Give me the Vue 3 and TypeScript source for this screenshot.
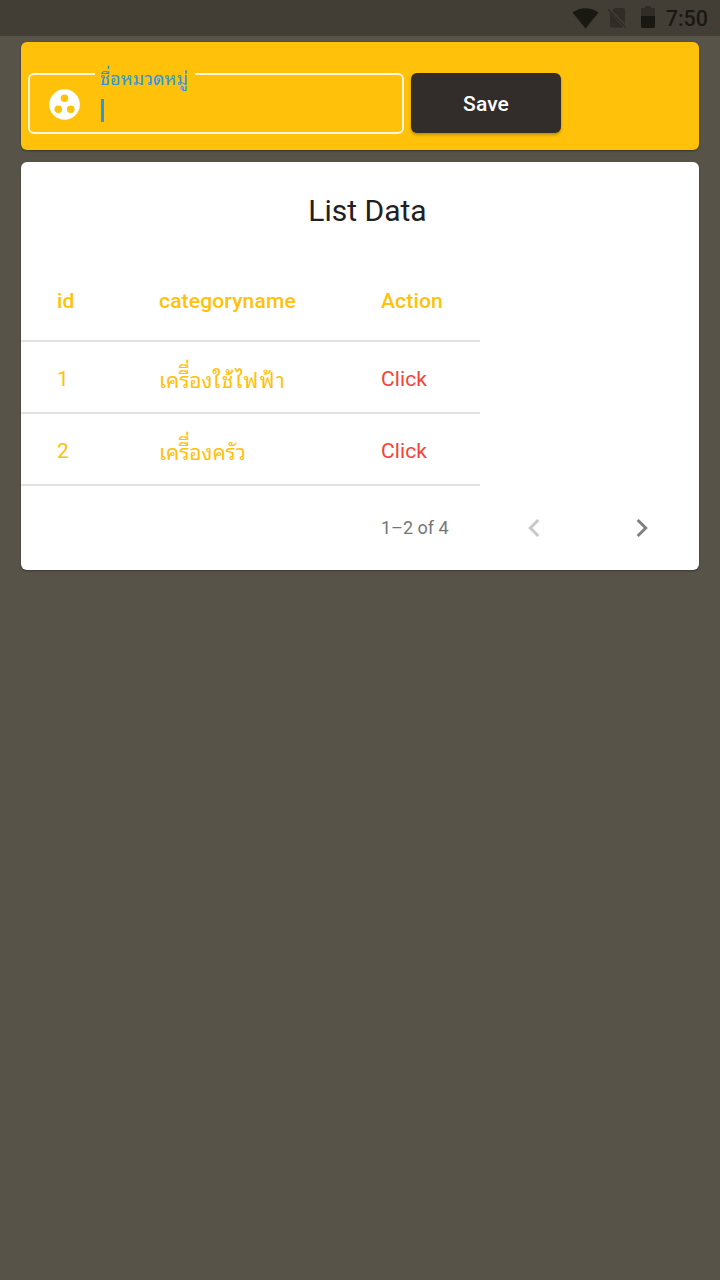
<script setup lang="ts">
import { ref } from 'vue'

interface Category {
  id: number
  name: string
  suffix: string
}

const categories = ref<Category[]>([
  { id: 1, name: 'เครืื่อง', suffix: 'ใช้ไฟฟ้า' },
  { id: 2, name: 'เครืื่องครัว', suffix: '' },
])
</script>

<template>
  <div class="screen">
    <header class="status">
      <svg class="wifi" viewBox="0 0 27 21"><path d="M.5 4.600C8-1.200 19-1.200 26.500 4.600L13.500 20.500Z" fill="#1a1813" /></svg>
      <svg class="sim" viewBox="0 0 21 22">
        <path d="M8 1h8.500a1.500 1.500 0 0 1 1.500 1.500v15.500L5.200 4z" fill="#302d27" />
        <path d="M3 5.500V19a1.500 1.500 0 0 0 1.500 1.500H16.500z" fill="#302d27" />
        <path d="M1 2.200L19 20.800" stroke="#302d27" stroke-width="1.600" fill="none" />
        <path d="M3.300 2.400L18.800 18.400" stroke="#413e36" stroke-width="1.200" fill="none" />
      </svg>
      <svg class="battery" viewBox="0 0 14 22">
        <path d="M4 0h6v2h3a1 1 0 0 1 1 1v7H0V3a1 1 0 0 1 1-1h3z" fill="#302d27" />
        <path d="M0 10h14v11a1 1 0 0 1-1 1H1a1 1 0 0 1-1-1z" fill="#1a1813" />
      </svg>
      <span class="clock">7:50</span>
    </header>

    <section class="card form">
      <fieldset class="field">
        <legend><span class="label">ชื่อหมวดหมู่</span></legend>
        <div class="input">
          <svg class="workspaces" viewBox="0 0 30 30">
            <circle cx="15" cy="15" r="14.800" fill="#fff" />
            <circle cx="15" cy="9" r="3.700" fill="#ffc109" />
            <circle cx="9" cy="19.600" r="3.700" fill="#ffc109" />
            <circle cx="21" cy="19.600" r="3.700" fill="#ffc109" />
          </svg>
          <i class="caret"></i>
        </div>
      </fieldset>
      <button class="save" type="button">Save</button>
    </section>

    <section class="card list">
      <h1>List Data</h1>
      <div class="table">
        <div class="row head">
          <span>id</span><span>categoryname</span><span>Action</span>
        </div>
        <div v-for="item in categories" :key="item.id" class="row">
          <span>{{ item.id }}</span>
          <span class="thai">{{ item.name }}<span v-if="item.suffix" class="suffix">{{ item.suffix }}</span></span>
          <span class="action">Click</span>
        </div>
      </div>
      <footer class="pager">
        <span class="range">1–2 of 4</span>
        <svg class="prev" viewBox="0 0 36 36"><path d="M22.300 10L14.300 18l8 8" /></svg>
        <svg class="next" viewBox="0 0 36 36"><path d="M13.700 10L21.700 18l-8 8" /></svg>
      </footer>
    </section>
  </div>
</template>

<style>
body { margin: 0; }
</style>

<style scoped>
.screen {
  box-sizing: border-box;
  width: 720px;
  height: 1280px;
  overflow: hidden;
  background: #585348;
  font-family: Roboto, "Liberation Sans", sans-serif;
}
.status {
  display: flex;
  align-items: center;
  justify-content: flex-end;
  box-sizing: border-box;
  height: 36px;
  padding-right: 12px;
  background: #423e36;
}
.wifi { width: 27px; height: 21px; margin-right: 8px; }
.sim { width: 21px; height: 22px; margin-right: 13px; }
.battery { width: 14px; height: 22px; margin-right: 11px; margin-bottom: 2px; }
.clock { font-size: 21.500px; font-weight: 500; line-height: 36px; color: #1a1813; padding-top: 2px; }
.card {
  box-sizing: border-box;
  width: 678px;
  margin: 6px 21px 12px;
  border-radius: 6px;
  box-shadow: 0 1px 2px rgba(0, 0, 0, 0.35);
}
.form {
  display: flex;
  height: 108px;
  padding: 31px 7px 0;
  background: #ffc109;
}
.field {
  box-sizing: border-box;
  width: 376px;
  height: 69px;
  min-width: 0;
  margin: -8px 7px 0 0;
  padding: 0;
  border: 2px solid rgba(255, 255, 255, 0.85);
  border-radius: 6px;
}
legend {
  height: 18px;
  margin-left: 65px;
  padding: 0 7px 0 5px;
}
.label {
  display: block;
  height: 18px;
  font-family: "Noto Sans Thai Looped", "Noto Looped Thai", Loma, Waree, Garuda, Umpush, "Tlwg Typo", "Noto Sans Thai", sans-serif;
  font-size: 18px;
  letter-spacing: 0.100px;
  line-height: 24px;
  color: #2896ea;
  white-space: nowrap;
}
.input { display: flex; align-items: center; height: 42px; padding-left: 19px; }
.workspaces { width: 31px; height: 31px; }
.caret { width: 3px; height: 23px; margin: 12px 0 0 21px; background: #2896ea; }
.save {
  width: 150px;
  height: 60px;
  padding: 0;
  border: 0;
  border-radius: 6px;
  background: #322d2a;
  box-shadow: 0 2px 3px rgba(0, 0, 0, 0.25);
  color: #fff;
  font: 500 21px/60px Roboto, "Liberation Sans", sans-serif;
  letter-spacing: 0.100px;
  padding-top: 1px;
}
.list { height: 408px; background: #fff; }
h1 {
  margin: 0;
  padding-left: 15px;
  height: 98px;
  font-size: 30px;
  font-weight: 400;
  line-height: 98px;
  text-align: center;
  color: #212121;
}
.table { width: 459px; }
.row {
  display: grid;
  grid-template-columns: 102px 222px 1fr;
  box-sizing: border-box;
  height: 72px;
  padding-left: 36px;
  border-bottom: 2px solid #e2e2e2;
  color: #ffc109;
  font-size: 21px;
  line-height: 74px;
}
.head { height: 82px; line-height: 82px; font-weight: 500; letter-spacing: 0.170px; }
.thai {
  font-family: "Noto Sans Thai Looped", "Noto Looped Thai", Loma, Waree, Garuda, Umpush, "Tlwg Typo", "Noto Sans Thai", sans-serif;
  white-space: nowrap;
}
.suffix { letter-spacing: 1.500px; }
.action { color: #f44336; letter-spacing: 0.100px; }
.pager { display: flex; align-items: center; height: 84px; padding-left: 360px; }
.range { width: 135px; padding-bottom: 2px; font-size: 18px; color: #757575; }
.pager svg { width: 36px; height: 36px; fill: none; stroke-width: 3; }
.prev { stroke: #c8c8c8; }
.next { margin-left: 72px; stroke: #808080; }
</style>
